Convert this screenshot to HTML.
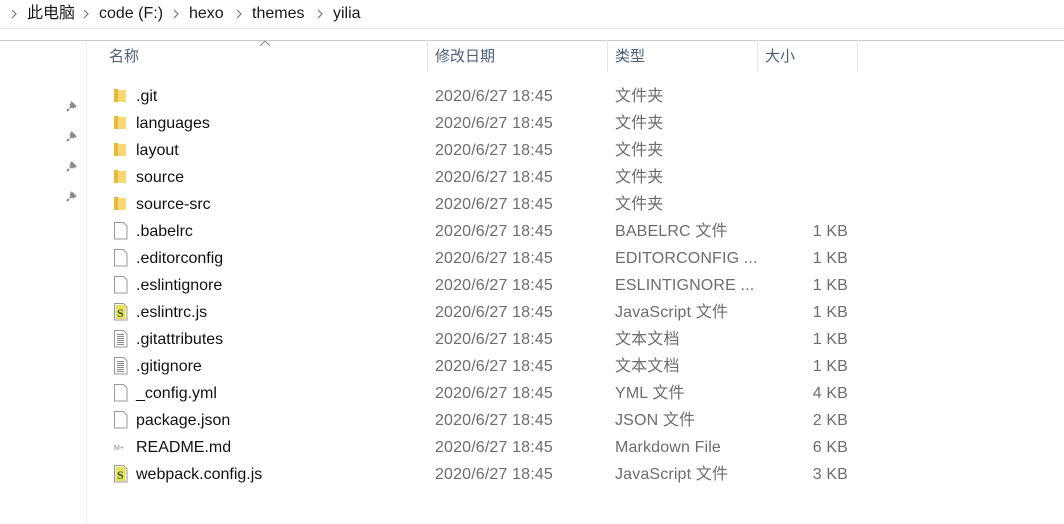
<!DOCTYPE html>
<html><head><meta charset="utf-8"><style>
body{margin:0;width:1064px;height:524px;background:#fff;font-family:"Liberation Sans","Noto Sans CJK SC",sans-serif;position:relative;overflow:hidden;font-size:16px;line-height:20px}
.a{position:absolute;white-space:nowrap;line-height:20px}
.bc{top:4px;color:#1a1a1a;font-size:16px}
.hd{color:#4c607a;top:47px;font-size:15px}
.sep{position:absolute;top:40px;height:32px;width:1px;background:#e5e5e5}
.n{color:#111}
.g{color:#6d6d6d;letter-spacing:0.15px}
.sz{width:80px;text-align:right;left:768px}
</style></head><body>
<div class="a" style="left:0;top:28px;width:1064px;height:1px;background:#e3e3e3"></div>
<div class="a" style="left:0;top:40px;width:1064px;height:1px;background:#c8c8c8"></div>
<div class="a" style="left:86px;top:41px;width:1px;height:483px;background:#f0f0f0"></div>
<svg class="a" style="left:0;top:0" width="400" height="28"><g fill="none" stroke="#777" stroke-width="1.2"><path d="M12 10l4 4-4 4"/><path d="M84 10l4 4-4 4"/><path d="M174 10l4 4-4 4"/><path d="M237 10l4 4-4 4"/><path d="M318 10l4 4-4 4"/></g></svg>
<span class="a bc" style="left:27px">此电脑</span>
<span class="a bc" style="left:99px">code (F:)</span>
<span class="a bc" style="left:189px">hexo</span>
<span class="a bc" style="left:252px">themes</span>
<span class="a bc" style="left:333px">yilia</span>
<svg class="a" style="left:259px;top:40px" width="12" height="7"><path d="M1 6L6 1L11 6" fill="none" stroke="#888" stroke-width="1"/></svg>
<span class="a hd" style="left:109px">名称</span>
<div class="sep" style="left:427px"></div><span class="a hd" style="left:435px">修改日期</span>
<div class="sep" style="left:607px"></div><span class="a hd" style="left:615px">类型</span>
<div class="sep" style="left:757px"></div><span class="a hd" style="left:765px">大小</span>
<div class="sep" style="left:857px"></div>
<div id="rows"></div>
<script>
var r=[["f",".git","文件夹",""],["f","languages","文件夹",""],["f","layout","文件夹",""],["f","source","文件夹",""],["f","source-src","文件夹",""],["d",".babelrc","BABELRC 文件","1 KB"],["d",".editorconfig","EDITORCONFIG ...","1 KB"],["d",".eslintignore","ESLINTIGNORE ...","1 KB"],["j",".eslintrc.js","JavaScript 文件","1 KB"],["t",".gitattributes","文本文档","1 KB"],["t",".gitignore","文本文档","1 KB"],["d","_config.yml","YML 文件","4 KB"],["d","package.json","JSON 文件","2 KB"],["m","README.md","Markdown File","6 KB"],["j","webpack.config.js","JavaScript 文件","3 KB"]];
var h="";
for(var i=0;i<r.length;i++){var y=87+i*27;var x=r[i];var ic="";var iy=y+1;
if(x[0]=="f")ic='<svg class="a" style="left:113px;top:'+iy+'px" width="14" height="16"><path d="M1 1h4l1 1h7v12H1z" fill="#f8d775"/><path d="M1 1h4v13H1z" fill="#e8b93a"/></svg>';
else if(x[0]=="m")ic='<svg class="a" style="left:114px;top:'+iy+'px" width="14" height="16"><text x="0" y="11" font-size="7" fill="#888" font-family="Liberation Sans">M+</text></svg>';
else{ic='<svg class="a" style="left:114px;top:'+y+'px" width="14" height="18"><path d="M0.5 0.5h9l3.5 3.5v13h-12.5z" fill="#fff" stroke="#999"/>';
if(x[0]=="t")for(var k=0;k<6;k++)ic+='<path d="M3 '+(4+k*2)+'.5h7" stroke="#888"/>';
if(x[0]=="j")ic+='<rect x="1.5" y="2" width="10" height="14" fill="#e8e060"/><text x="3" y="14" font-size="12" font-weight="bold" fill="#3a5a20" font-family="Liberation Serif">S</text>';
ic+='</svg>';}
h+=ic+'<span class="a n" style="left:136px;top:'+y+'px">'+x[1]+'</span><span class="a g" style="left:435px;top:'+y+'px">2020/6/27 18:45</span><span class="a g" style="left:615px;top:'+y+'px">'+x[2]+'</span><span class="a g sz" style="top:'+y+'px">'+x[3]+'</span>';}
for(var p=0;p<4;p++)h+='<svg class="a" style="left:66px;top:'+(100+p*30)+'px" width="12" height="12"><path d="M3 9L1 11M4 4l4 4M5 2l5 5M4 8l3-3" stroke="#8a8a8a" stroke-width="2" fill="none"/></svg>';
document.getElementById("rows").innerHTML=h;
</script>
</body></html>
